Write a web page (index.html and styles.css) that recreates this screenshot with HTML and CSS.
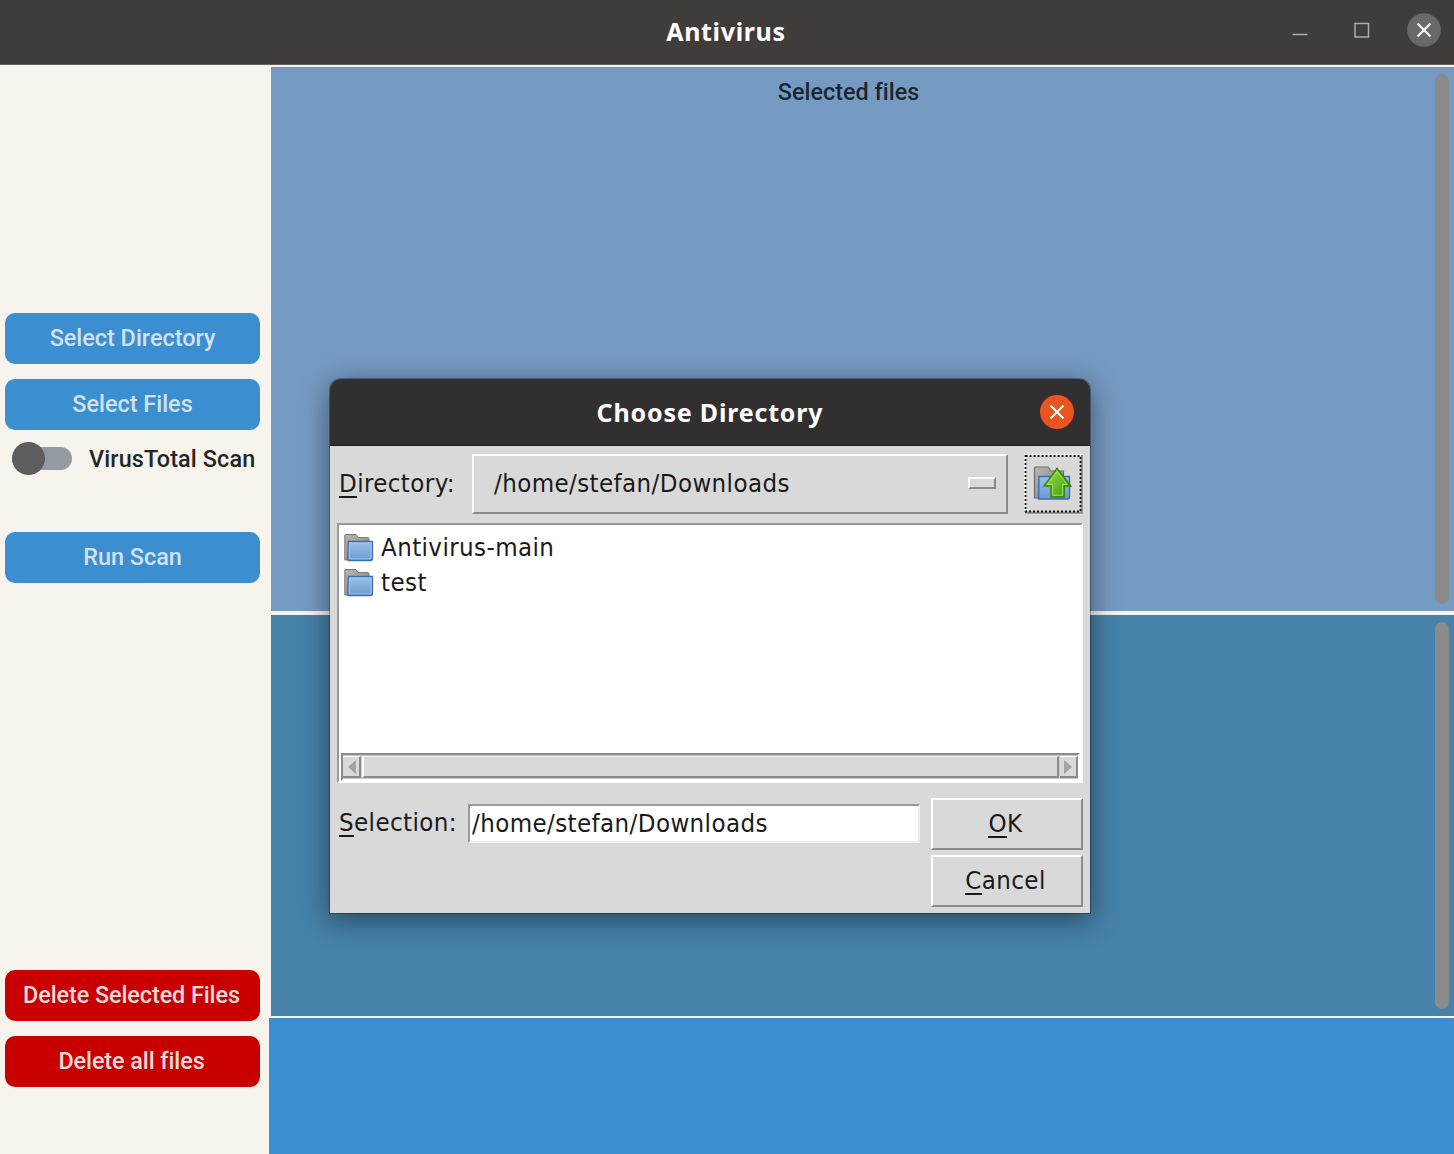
FILE: index.html
```html
<!DOCTYPE html>
<html lang="en">
<head>
<meta charset="utf-8">
<title>Antivirus</title>
<link rel="stylesheet" href="styles.css">
</head>
<body>
<svg width="0" height="0" class="defs" aria-hidden="true">
  <defs>
    <linearGradient id="blue" x1="0" y1="0" x2="0" y2="1"><stop offset="0" stop-color="#9dbfe6"/><stop offset="1" stop-color="#6c9bd2"/></linearGradient>
    <linearGradient id="grey" x1="0" y1="0" x2="1" y2="1"><stop offset="0" stop-color="#b4b4b0"/><stop offset="1" stop-color="#858581"/></linearGradient>
    <linearGradient id="green" x1="0" y1="0" x2="1" y2="1"><stop offset="0" stop-color="#9be04a"/><stop offset="1" stop-color="#3c9a0c"/></linearGradient>
    <symbol id="folder" viewBox="0 0 30 29">
      <path d="M.8 27V2.500Q.8 1.500 1.800 1.500H12L14 4.500H23.500Q25 4.500 25 6V15H6V27Z" fill="url(#grey)" stroke="#777774"/>
      <path d="M4.200 8.500H28.500V25.500Q28.500 27.500 26.500 27.500H5Q3.700 27.500 3.700 26Z" fill="url(#blue)" stroke="#3d6dac" stroke-width="1.300"/>
      <path d="M5.500 10H27V25.800H5.500Z" fill="none" stroke="#a9c8ec" stroke-width=".8"/>
    </symbol>
  </defs>
</svg>
<div class="window">
  <header class="titlebar">
    <h1 class="title">Antivirus</h1>
    <svg class="controls" width="154" height="64" viewBox="0 0 154 64">
      <path d="M-7.500 34.500H7.500" class="glyph"/>
      <rect x="55" y="23.500" width="13.500" height="13.500" class="glyph"/>
      <circle cx="124" cy="30" r="16.800" fill="#6a6967"/>
      <path d="M117.500 23.500L130.500 36.500M130.500 23.500L117.500 36.500" stroke="#f3f3f2" stroke-width="2.300"/>
    </svg>
  </header>
  <div class="content">
    <aside class="sidebar">
      <div class="group">
        <button class="action">Select Directory</button>
        <button class="action">Select Files</button>
        <label class="switch"><span class="track"><span class="knob"></span></span><span class="switch-text">VirusTotal Scan</span></label>
        <button class="action run">Run Scan</button>
      </div>
      <div class="group danger">
        <button class="action">Delete Selected Files</button>
        <button class="action">Delete all files</button>
      </div>
    </aside>
    <main class="panels">
      <section class="panel files"><h2 class="heading">Selected files</h2><div class="scroll"></div></section>
      <section class="panel results"><div class="scroll"></div></section>
      <section class="log"></section>
    </main>
  </div>
</div>
<div class="dialog">
  <header class="dialog-bar">
    <h2 class="dialog-title">Choose Directory</h2>
    <svg class="dialog-close" width="34" height="34" viewBox="0 0 34 34"><circle cx="17" cy="17" r="17" fill="#e95420"/><path d="M10.500 10.500L23.500 23.500M23.500 10.500L10.500 23.500" stroke="#fff" stroke-width="2.100"/></svg>
  </header>
  <div class="dialog-body">
    <div class="row">
      <span class="label"><span class="key">D</span>irectory:</span>
      <div class="menu"><span class="path">/home/stefan/Downloads</span><span class="indicator"></span></div>
      <div class="up">
        <svg width="59" height="60" viewBox="0 0 59 60">
          <path d="M0 60V0H59" fill="none" stroke="#fff" stroke-width="3"/>
          <path d="M1 58.800H57.800V1" fill="none" stroke="#8b8b8b" stroke-width="2"/>
          <rect x="1.500" y="2" width="55" height="55.500" fill="none" stroke="#111" stroke-width="1.800" stroke-dasharray="2 2"/>
          <path d="M10.500 44V14Q10.500 13 11.500 13H24L27 17H39.500V25H16V44Z" fill="url(#grey)" stroke="#6e6e6c" stroke-width="1.200"/>
          <path d="M15 22.500H45.500V43Q45.500 45 43.500 45H14.500Z" fill="url(#blue)" stroke="#3d6dac" stroke-width="1.400"/>
          <path d="M33 14.500L46.800 32H40.300V43H27V32H20Z" fill="url(#green)" stroke="#3a870c" stroke-width="1.500"/>
          <path d="M33 17.500L43 30.500H38.600V41.200H28.700V30.500H23.500Z" fill="none" stroke="#a5ea60" stroke-width=".9"/>
        </svg>
      </div>
    </div>
    <div class="list">
      <ul class="items">
        <li class="item"><svg width="30" height="29"><use href="#folder"/></svg><span>Antivirus-main</span></li>
        <li class="item"><svg width="30" height="29"><use href="#folder"/></svg><span>test</span></li>
      </ul>
      <div class="hscroll">
        <span class="arrow"><svg width="17" height="22"><path d="M13 4V18L5 11Z" fill="#a3a3a3"/></svg></span>
        <span class="thumb"></span>
        <span class="arrow"><svg width="17" height="22"><path d="M4 4V18L12 11Z" fill="#a3a3a3"/></svg></span>
      </div>
    </div>
    <div class="row bottom">
      <span class="label"><span class="key">S</span>election:</span>
      <div class="entry"><span class="path">/home/stefan/Downloads</span></div>
      <div class="buttons">
        <button class="tk"><span class="key">O</span>K</button>
        <button class="tk"><span class="key">C</span>ancel</button>
      </div>
    </div>
  </div>
</div>
</body>
</html>
```
FILE: styles.css
```css
* { box-sizing: border-box; margin: 0; padding: 0; }
body { width: 1454px; height: 1154px; overflow: hidden; position: relative; background: #f6f4ec; font-family: Roboto, sans-serif; font-variant-ligatures: none; }
.defs { position: absolute; }
button { border: 0; font: inherit; color: inherit; letter-spacing: inherit; }
.window { width: 1454px; height: 1154px; display: flex; flex-direction: column; }
.titlebar { height: 65px; flex: none; background: #3f3c3a; border-bottom: 1px solid #65625e; display: grid; grid-template-columns: 1fr auto 1fr; align-items: center; }
.title { grid-column: 2; font: 700 25px/62px "Noto Sans", sans-serif; color: #fff; letter-spacing: .65px; padding: 0 2px 2px 0; }
.controls { justify-self: end; overflow: visible; }
.glyph { fill: none; stroke: #aeadab; stroke-width: 1.5; }
.content { flex: 1; display: flex; }
.sidebar { width: 269px; padding: 248px 9px 67px 5px; display: flex; flex-direction: column; justify-content: space-between; }
.group { display: flex; flex-direction: column; gap: 15px; }
.action { height: 51px; border-radius: 10px; background: #3b8ed0; color: #d2e1ee; font-size: 23.4px; font-weight: 500; line-height: 49px; padding-bottom: 1px; white-space: nowrap; }
.danger .action { background: #c80000; color: #f1dada; letter-spacing: -.08px; padding-right: 2px; }
.switch { height: 33px; margin: -3px 0 42px 7px; display: flex; align-items: center; gap: 17px; color: #252525; }
.track { width: 60px; height: 23px; border-radius: 12px; background: #939ba2; display: flex; align-items: center; flex: none; }
.knob { width: 33px; height: 33px; border-radius: 50%; background: #5d5d5d; flex: none; }
.switch-text { font-size: 23.4px; font-weight: 500; white-space: nowrap; letter-spacing: .12px; }
.panels { width: 1185px; display: flex; flex-direction: column; padding-top: 2px; }
.panel { margin-left: 2px; display: flex; justify-content: flex-end; padding: 7px 5px 7px 0; }
.files { height: 544px; background: #769bc3; margin-bottom: 4px; }
.results { height: 401px; background: #4682aa; margin-bottom: 2px; }
.log { flex: 1; background: #3b8ed0; }
.heading { flex: 1; padding-right: 9px; font-size: 23.4px; font-weight: 500; line-height: 36px; color: #1c2631; text-align: center; }
.scroll { width: 14px; border-radius: 7px; background: #8b8b8b; }
.dialog { position: absolute; left: 330px; top: 379px; width: 760px; height: 534px; border-radius: 11px 11px 0 0; box-shadow: 0 0 0 1px rgba(0,0,0,.3), 0 6px 28px 2px rgba(0,0,0,.43); color: #1a1a1a; font-family: "DejaVu Sans Condensed", "DejaVu Sans", sans-serif; font-stretch: condensed; font-size: 25.6px; letter-spacing: .4px; }
.dialog-bar { height: 67px; border-radius: 11px 11px 0 0; background: #322f30; border-bottom: 1px solid #1c191a; display: grid; grid-template-columns: 1fr auto 1fr; align-items: center; }
.dialog-title { grid-column: 2; font: 700 25px/67px "Noto Sans", sans-serif; color: #fff; letter-spacing: .82px; }
.dialog-close { justify-self: end; margin: 0 16px 2px 0; }
.dialog-body { height: 467px; background: #d9d9d9; padding: 8px 7px 6px; }
.row { height: 60px; display: flex; }
.label { width: 135px; padding-left: 2px; line-height: 59px; flex: none; white-space: nowrap; }
.key { display: inline-block; line-height: 30px; border-bottom: 2px solid #1a1a1a; height: 30px; }
.path { white-space: nowrap; }
.menu { width: 536px; margin-right: 16px; border: 2px solid; border-color: #fff #8b8b8b #8b8b8b #fff; display: flex; align-items: center; justify-content: space-between; padding: 0 10px 2px 20px; }
.indicator { width: 28px; height: 12px; border: 2px solid; border-color: #fff #8b8b8b #8b8b8b #fff; }
.up { width: 59px; height: 60px; }
.list { height: 260px; margin-top: 9px; background: #fff; border: 2px solid; border-color: #999 #fff #fff #999; padding: 4px 1px 0 2px; display: flex; flex-direction: column; justify-content: space-between; }
.items { list-style: none; padding-left: 3px; }
.item { height: 35px; display: flex; align-items: center; gap: 7px; }
.item svg { margin-top: 2px; }
.hscroll { height: 28px; border: 2px solid; border-color: #8b8b8b #fff #fff #8b8b8b; background: #c9c9c9; display: flex; gap: 1px; padding: 1px 0; }
.arrow { width: 18px; background: #d9d9d9; border-right: 2px solid #8b8b8b; border-bottom: 2px solid #8b8b8b; border-top: 1px solid #fff; overflow: hidden; }
.arrow svg { display: block; margin-top: -1px; }
.thumb { flex: 1; background: #d9d9d9; border: 2px solid; border-width: 1px 2px 2px; border-color: #eee #8b8b8b #8b8b8b #fff; }
.bottom { height: 108px; margin-top: 16px; }
.bottom .label { width: 131px; line-height: 47px; }
.entry { width: 452px; height: 39px; margin: 5px 11px 0 0; background: #fff; border: 2px solid; border-color: #999 #eee #eee #999; padding-left: 2px; line-height: 34px; }
.buttons { width: 152px; display: flex; flex-direction: column; gap: 5px; margin-top: -1px; }
.tk { height: 52px; background: #d9d9d9; border: 2px solid; border-color: #fff #8b8b8b #8b8b8b #fff; line-height: 46px; padding: 0 3px 2px 0; }
```
